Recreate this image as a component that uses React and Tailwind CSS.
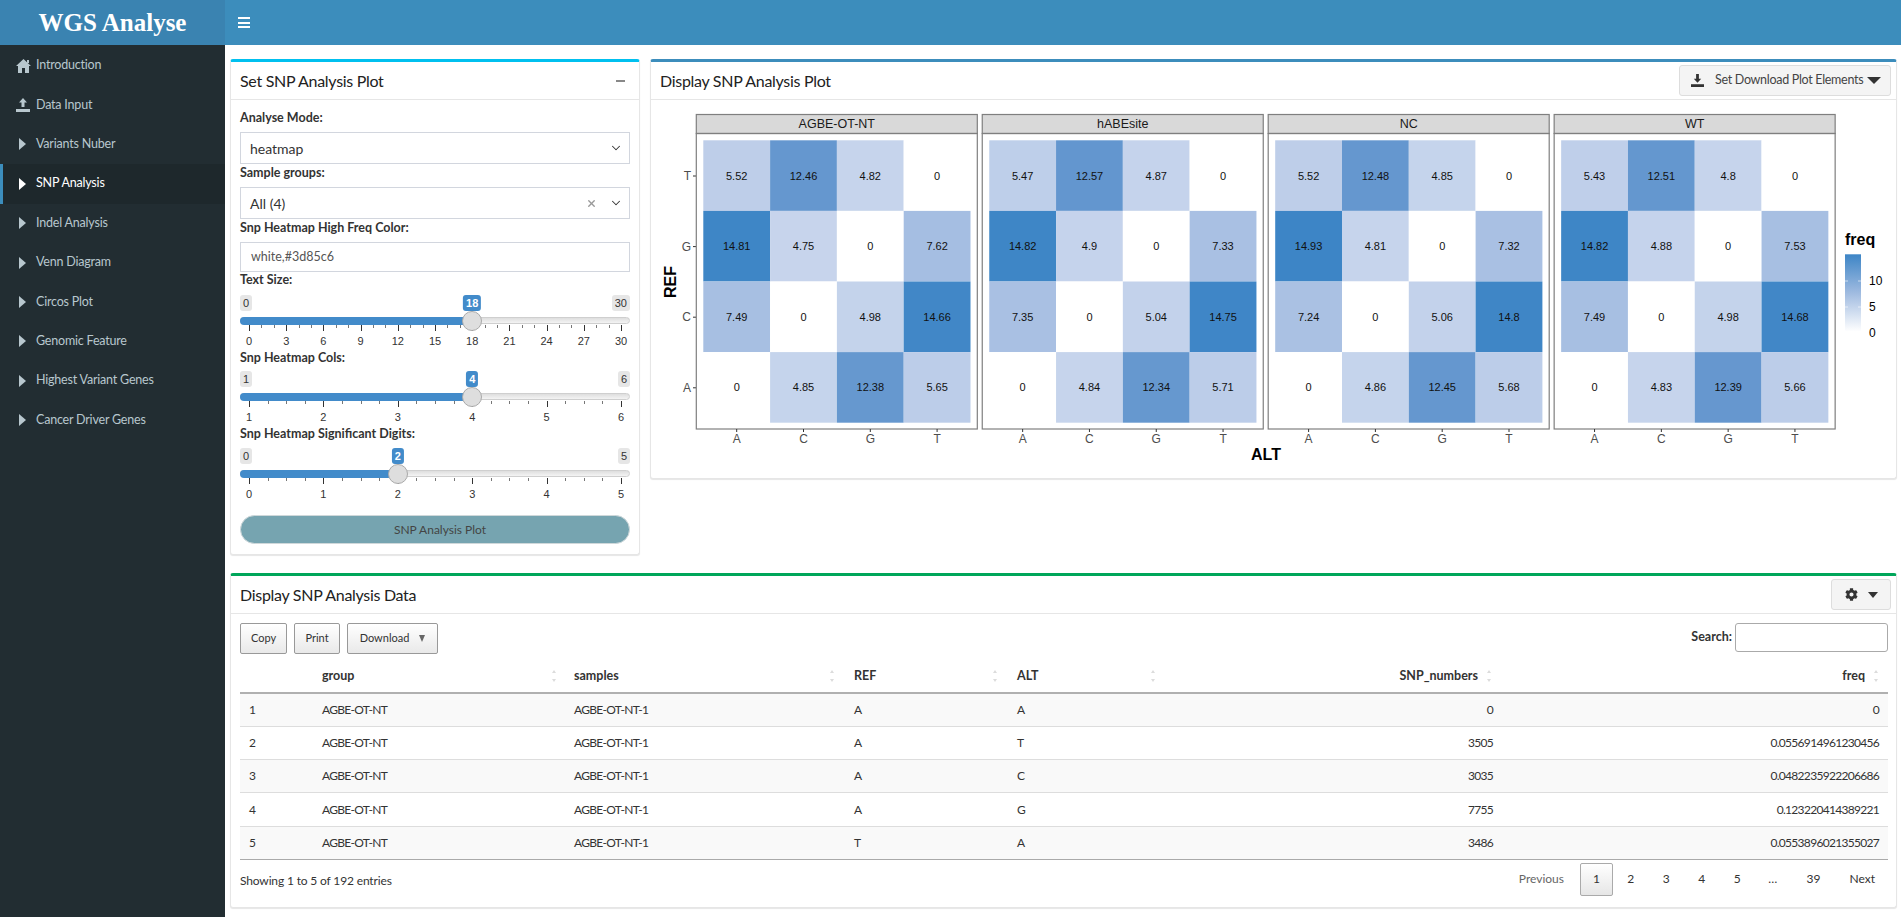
import React from 'react';
import { FaCog } from 'react-icons/fa';
import { ChevronDown, X } from 'lucide-react';

const navItems = [
  { label: 'Introduction', icon: 'home' },
  { label: 'Data Input', icon: 'upload' },
  { label: 'Variants Nuber' },
  { label: 'SNP Analysis', active: true },
  { label: 'Indel Analysis' },
  { label: 'Venn Diagram' },
  { label: 'Circos Plot' },
  { label: 'Genomic Feature' },
  { label: 'Highest Variant Genes' },
  { label: 'Cancer Driver Genes' },
];

const facets = [
  { name: 'AGBE-OT-NT', rows: [[5.52, 12.46, 4.82, 0], [14.81, 4.75, 0, 7.62], [7.49, 0, 4.98, 14.66], [0, 4.85, 12.38, 5.65]] },
  { name: 'hABEsite', rows: [[5.47, 12.57, 4.87, 0], [14.82, 4.9, 0, 7.33], [7.35, 0, 5.04, 14.75], [0, 4.84, 12.34, 5.71]] },
  { name: 'NC', rows: [[5.52, 12.48, 4.85, 0], [14.93, 4.81, 0, 7.32], [7.24, 0, 5.06, 14.8], [0, 4.86, 12.45, 5.68]] },
  { name: 'WT', rows: [[5.43, 12.51, 4.8, 0], [14.82, 4.88, 0, 7.53], [7.49, 0, 4.98, 14.68], [0, 4.83, 12.39, 5.66]] },
];

const tableRows = [
  [1, 'AGBE-OT-NT', 'AGBE-OT-NT-1', 'A', 'A', '0', '0'],
  [2, 'AGBE-OT-NT', 'AGBE-OT-NT-1', 'A', 'T', '3505', '0.0556914961230456'],
  [3, 'AGBE-OT-NT', 'AGBE-OT-NT-1', 'A', 'C', '3035', '0.0482235922206686'],
  [4, 'AGBE-OT-NT', 'AGBE-OT-NT-1', 'A', 'G', '7755', '0.123220414389221'],
  [5, 'AGBE-OT-NT', 'AGBE-OT-NT-1', 'T', 'A', '3486', '0.0553896021355027'],
];

// colour ramp read off the plot
const stops = [
  [0, [255, 255, 255]],
  [4.8, [198, 212, 236]],
  [7.5, [167, 191, 226]],
  [12.45, [101, 151, 207]],
  [14.9, [61, 133, 198]],
];

const tileColor = (v) => {
  for (let i = 1; i < stops.length; i++) {
    if (v <= stops[i][0]) {
      const [a, ca] = stops[i - 1];
      const [b, cb] = stops[i];
      const t = (v - a) / (b - a);
      return `rgb(${ca.map((c, k) => Math.round(c + (cb[k] - c) * t)).join(',')})`;
    }
  }
  return 'rgb(61,133,198)';
};

const NavIcon = ({ icon }) => {
  if (icon === 'home') {
    return (
      <svg width="15" height="14" viewBox="0 0 15 14" className="ml-[1px] mr-[5px]" fill="currentColor">
        <path d="M7.5 0 L15 7 L13 7 L13 14 L9 14 L9 9 L6 9 L6 14 L2 14 L2 7 L0 7 Z" />
        <rect x="11" y="1" width="2" height="3" />
      </svg>
    );
  }
  if (icon === 'upload') {
    return (
      <svg width="14" height="14" viewBox="0 0 14 14" className="ml-[1px] mr-[6px]" fill="currentColor">
        <path d="M7 0 L11 4.5 L8.5 4.5 L8.5 9 L5.5 9 L5.5 4.5 L3 4.5 Z" />
        <rect x="0" y="11" width="14" height="3" />
      </svg>
    );
  }
  return (
    <svg width="7" height="12" viewBox="0 0 7 12" className="ml-[4px] mr-[10px]" fill="currentColor">
      <path d="M0 0 L7 6 L0 12 Z" />
    </svg>
  );
};

const Sidebar = () => (
  <aside className="w-[225px] shrink-0 bg-[#222d32] pb-[1px]">
    <ul className="pt-[1px] text-[#b8c7ce]">
      {navItems.map(({ label, icon, active }) => (
        <li
          key={label}
          className={`flex h-[39.4px] items-center text-[12.5px] tracking-[-0.2px] ${
            active ? 'bg-[#1e282c] text-white border-l-[3px] border-[#3c8dbc] pl-[12px]' : 'pl-[15px]'
          }`}
        >
          <NavIcon icon={icon} />
          <span>{label}</span>
        </li>
      ))}
    </ul>
  </aside>
);

const Box = ({ color, title, right, className, children }) => (
  <section className={`bg-white rounded-[3px] border border-[#e6e6e6] border-t-[3px] ${color} shadow-[0_1px_1px_rgba(0,0,0,0.1)] ${className}`}>
    <div className="flex h-[38px] items-center justify-between border-b border-[#e6e6e6] pl-[9px] pr-[5px]">
      <h3 className="text-[16px] tracking-[-0.3px] text-[#222]">{title}</h3>
      {right}
    </div>
    {children}
  </section>
);

const Label = ({ children, className = '' }) => (
  <div className={`text-[12.5px] font-bold leading-[14px] text-[#333] ${className}`}>{children}</div>
);

const SelectBox = ({ value, clearable }) => (
  <div className="mt-[7px] flex h-[32px] items-center border border-[#d2d6de] pl-[9px] pr-[6px] text-[14px] text-[#333]">
    <span className="flex-1">{value}</span>
    {clearable && <X size={11} strokeWidth={3} className="mr-[12px] text-[#999]" />}
    <ChevronDown size={14} strokeWidth={1.75} className="text-[#333]" />
  </div>
);

const Slider = ({ min, max, value, labels, minors, className }) => {
  const pos = (v) => ((v - min) / (max - min)) * 100;
  const intervals = labels.length - 1;
  const ticks = [];
  for (let i = 0; i <= intervals; i++) {
    ticks.push({ p: (i / intervals) * 100, major: true });
    if (i < intervals) {
      for (let m = 1; m <= minors; m++) {
        ticks.push({ p: ((i + m / (minors + 1)) / intervals) * 100, major: false });
      }
    }
  }
  return (
    <div className={`relative h-[56px] font-['Liberation_Sans',sans-serif] text-[11px] text-[#333] ${className}`}>
      <span className="absolute left-0 top-0 flex h-[16px] items-center rounded-[3px] bg-[#e6e6e6] px-[3px]">{min}</span>
      <span className="absolute right-0 top-0 flex h-[16px] items-center rounded-[3px] bg-[#e6e6e6] px-[3px]">{max}</span>
      <div className="absolute left-0 right-0 top-[22px] h-[7px] rounded-full border border-[#cfcfcf] bg-gradient-to-b from-[#dedede] to-[#f4f4f4]" />
      {/* ticks run between the 9px insets of the slider */}
      <div className="absolute left-[9px] right-[9px] top-0 h-full">
        <div
          className="absolute left-[-9px] top-[22px] h-[8px] rounded-l-full bg-[#428bca]"
          style={{ width: `calc(${pos(value)}% + 9px)` }}
        />
        {ticks.map(({ p, major }) => (
          <span
            key={p}
            className={`absolute top-[30px] w-px ${major ? 'h-[6px] bg-[#333]' : 'h-[3px] bg-[#777]'}`}
            style={{ left: `${p}%` }}
          />
        ))}
        {labels.map((l, i) => (
          <span
            key={l}
            className="absolute top-[38px] -translate-x-1/2 text-[#333]"
            style={{ left: `${(i / intervals) * 100}%` }}
          >
            {l}
          </span>
        ))}
        <span
          className="absolute top-0 flex h-[16px] -translate-x-1/2 items-center rounded-[3px] bg-[#428bca] px-[3px] font-bold text-white"
          style={{ left: `${pos(value)}%` }}
        >
          {value}
        </span>
        <span
          className="absolute top-[16px] h-[20px] w-[20px] -translate-x-1/2 rounded-full border border-[#aaa] bg-[#dedede]"
          style={{ left: `${pos(value)}%` }}
        />
      </div>
    </div>
  );
};

const SettingsBox = () => (
  <Box
    color="border-t-[#00c0ef]"
    title="Set SNP Analysis Plot"
    className="w-[410px] h-[496px] shrink-0"
    right={<span className="mr-[9px] h-[2px] w-[9px] bg-[#888]" />}
  >
    <div className="px-[9px] pt-[11px]">
      <Label>Analyse Mode:</Label>
      <SelectBox value="heatmap" />
      <Label className="mt-[2px]">Sample groups:</Label>
      <SelectBox value="All (4)" clearable />
      <Label className="mt-[2px]">Snp Heatmap High Freq Color:</Label>
      <div className="mt-[7px] flex h-[30px] items-center border border-[#d2d6de] pl-[10px] text-[12.5px] text-[#555]">white,#3d85c6</div>
      <Label className="mt-[1px]">Text Size:</Label>
      <Slider min={0} max={30} value={18} labels={[0, 3, 6, 9, 12, 15, 18, 21, 24, 27, 30]} minors={2} className="mt-[8px]" />
      <Label>Snp Heatmap Cols:</Label>
      <Slider min={1} max={6} value={4} labels={[1, 2, 3, 4, 5, 6]} minors={3} className="mt-[6px]" />
      <Label>Snp Heatmap Significant Digits:</Label>
      <Slider min={0} max={5} value={2} labels={[0, 1, 2, 3, 4, 5]} minors={3} className="mt-[7px]" />
      <button className="mt-[11px] flex h-[29px] w-full items-center justify-center rounded-full border border-[#cfd8da] bg-[#76a4b0] pl-[10px] text-[12px] text-[#444]">
        SNP Analysis Plot
      </button>
    </div>
  </Box>
);

const HeatmapPlot = () => {
  const pitch = 285.95;
  const fontSans = 'Liberation Sans, Arial, sans-serif';
  return (
    <svg width="1245" height="376" className="block" fontFamily={fontSans}>
      {/* coordinates below are page coordinates */}
      <g transform="translate(-651,-100)">
        <text x="676" y="282" transform="rotate(-90 676 282)" textAnchor="middle" fontSize="16" fontWeight="bold">REF</text>
        {['T', 'G', 'C', 'A'].map((l, r) => (
          <g key={l}>
            <text x="691" y={176 + r * 70.6} dy="4" textAnchor="end" fontSize="12" fill="#4d4d4d">{l}</text>
            <line x1="693" x2="696" y1={176 + r * 70.6} y2={176 + r * 70.6} stroke="#333" />
          </g>
        ))}
        {facets.map((f, i) => {
          const x0 = 696.3 + i * pitch;
          return (
            <g key={f.name}>
              {f.rows.map((row, r) =>
                row.map((v, c) => {
                  const x = x0 + 7 + c * 66.8;
                  const y = 140.3 + r * 70.6;
                  return (
                    <g key={c}>
                      <rect x={x} y={y} width="66.8" height="70.6" fill={tileColor(v)} />
                      <text x={x + 33.4} y={y + 35.3} dy="4" textAnchor="middle" fontSize="11" fill="#111">{v}</text>
                    </g>
                  );
                })
              )}
              <rect x={x0} y="114.5" width="281" height="19" fill="#d9d9d9" stroke="#7f7f7f" strokeWidth="1.2" />
              <text x={x0 + 140.5} y="128" textAnchor="middle" fontSize="12.5" fill="#1a1a1a">{f.name}</text>
              <rect x={x0} y="133.5" width="281" height="295.5" fill="none" stroke="#7f7f7f" strokeWidth="1.2" />
              {['A', 'C', 'G', 'T'].map((l, c) => (
                <g key={l}>
                  <line x1={x0 + 40.4 + c * 66.8} x2={x0 + 40.4 + c * 66.8} y1="429" y2="432" stroke="#333" />
                  <text x={x0 + 40.4 + c * 66.8} y="443" textAnchor="middle" fontSize="12" fill="#4d4d4d">{l}</text>
                </g>
              ))}
            </g>
          );
        })}
        <text x="1266" y="460" textAnchor="middle" fontSize="16" fontWeight="bold">ALT</text>
        <text x="1845" y="245" fontSize="16" fontWeight="bold">freq</text>
        <defs>
          <linearGradient id="freqBar" x1="0" y1="0" x2="0" y2="1">
            <stop offset="0" stopColor="#3d85c6" />
            <stop offset="0.5" stopColor="#a0bbe0" />
            <stop offset="1" stopColor="#ffffff" />
          </linearGradient>
        </defs>
        <rect x="1845" y="254.3" width="16" height="77.4" fill="url(#freqBar)" />
        {[[10, 281], [5, 307], [0, 333]].map(([l, y]) => (
          <g key={l}>
            <line x1="1845" x2="1848" y1={y} y2={y} stroke="#fff" opacity="0.6" />
            <line x1="1858" x2="1861" y1={y} y2={y} stroke="#fff" opacity="0.6" />
            <text x="1869" y={y + 4} fontSize="12">{l}</text>
          </g>
        ))}
      </g>
    </svg>
  );
};

const PlotBox = () => (
  <Box
    color="border-t-[#3c8dbc]"
    title="Display SNP Analysis Plot"
    className="flex-1 h-[420px]"
    right={
      <button className="flex h-[31px] w-[212px] items-center rounded-[3px] border border-[#ddd] bg-[#f4f4f4] pl-[11px] text-[12.5px] tracking-[-0.3px] text-[#444]">
        <svg width="13" height="13" viewBox="0 0 14 14" fill="currentColor" className="text-[#333]">
          <path d="M5.5 0 L8.5 0 L8.5 5 L11 5 L7 9.5 L3 5 L5.5 5 Z" />
          <rect x="0" y="11" width="14" height="3" />
        </svg>
        <span className="ml-[11px]">Set Download Plot Elements</span>
        <span className="ml-[4px] h-0 w-0 border-x-[7px] border-t-[7px] border-x-transparent border-t-[#333]" />
      </button>
    }
  >
    <HeatmapPlot />
  </Box>
);

const SortIcon = () => (
  <svg width="6" height="14" viewBox="0 0 6 14" fill="#dcdcdc" className="absolute top-[9px]">
    <path d="M3 1 L5 4 L1 4 Z M3 13 L5 10 L1 10 Z" />
  </svg>
);

const HeadCell = ({ children, align = 'left', iconRight = 11 }) => (
  <th className={`relative ${align === 'left' ? 'pl-[8px] text-left' : 'pr-[23px] text-right'}`}>
    {children}
    <span className="absolute top-0 h-full" style={{ right: iconRight + 6 }}>
      <SortIcon />
    </span>
  </th>
);

const DtButton = ({ children, className = '' }) => (
  <button className={`flex h-[31px] items-center justify-center rounded-[2px] border border-[#999] bg-gradient-to-b from-white to-[#e9e9e9] text-[11px] text-[#333] ${className}`}>
    {children}
  </button>
);

const DataBox = () => (
  <Box
    color="border-t-[#00a65a]"
    title="Display SNP Analysis Data"
    className="mt-[18px] h-[335px]"
    right={
      <button className="flex h-[31px] w-[60px] items-center justify-center gap-[10px] rounded-[3px] border border-[#ddd] bg-[#f4f4f4] text-[#333]">
        <FaCog size={13} />
        <span className="h-0 w-0 border-x-[5px] border-t-[6px] border-x-transparent border-t-[#333]" />
      </button>
    }
  >
    <div className="pl-[9px] pr-[8px] pt-[9px]">
      <div className="flex h-[31px] items-start justify-between">
        <div className="flex gap-[7px]">
          <DtButton className="w-[47px]">Copy</DtButton>
          <DtButton className="w-[46px]">Print</DtButton>
          <DtButton className="w-[91px] gap-[10px]">
            Download
            <span className="h-0 w-0 border-x-[3.5px] border-t-[7px] border-x-transparent border-t-[#666]" />
          </DtButton>
        </div>
        <div className="flex items-center gap-[3px] text-[12.5px] font-bold text-[#333]">
          Search:
          <span className="h-[29px] w-[153px] rounded-[3px] border border-[#aaa] bg-white" />
        </div>
      </div>
      <table className="mt-[6px] w-[1648px] table-fixed text-[12px] tracking-[-0.7px] text-[#333]">
        <colgroup>
          <col className="w-[74px]" />
          <col className="w-[252px]" />
          <col className="w-[280px]" />
          <col className="w-[163px]" />
          <col className="w-[151px]" />
          <col className="w-[341px]" />
          <col className="w-[387px]" />
        </colgroup>
        <thead>
          <tr className="h-[33px] border-b-2 border-[#b0b0b0] text-[12.5px] font-bold tracking-normal">
            <th />
            <HeadCell iconRight={9}>group</HeadCell>
            <HeadCell iconRight={11}>samples</HeadCell>
            <HeadCell iconRight={11}>REF</HeadCell>
            <HeadCell iconRight={4}>ALT</HeadCell>
            <HeadCell align="right" iconRight={9}>SNP_numbers</HeadCell>
            <HeadCell align="right" iconRight={9}>freq</HeadCell>
          </tr>
        </thead>
        <tbody>
          {tableRows.map((row, i) => (
            <tr key={row[0]} className={`h-[33.3px] border-b border-[#ddd] last:border-[#aaa] ${i % 2 === 0 ? 'bg-[#f9f9f9]' : 'bg-white'}`}>
              <td className="pl-[9px]">{row[0]}</td>
              <td className="pl-[8px]">{row[1]}</td>
              <td className="pl-[8px]">{row[2]}</td>
              <td className="pl-[8px]">{row[3]}</td>
              <td className="pl-[8px]">{row[4]}</td>
              <td className="pr-[8px] text-right">{row[5]}</td>
              <td className="pr-[9px] text-right">{row[6]}</td>
            </tr>
          ))}
        </tbody>
      </table>
      <div className="mt-[3px] flex items-start justify-between text-[12px] text-[#333]">
        <span className="mt-[9px] tracking-[-0.15px]">Showing 1 to 5 of 192 entries</span>
        <div className="flex h-[33px] items-center pr-[13px]">
          <span className="mr-[16px] text-[#666]">Previous</span>
          <span className="flex h-[33px] w-[33px] items-center justify-center rounded-[2px] border border-[#aaa] bg-gradient-to-b from-white to-[#e6e6e6]">1</span>
          <span className="w-[35.5px] text-center">2</span>
          <span className="w-[35.5px] text-center">3</span>
          <span className="w-[35.5px] text-center">4</span>
          <span className="w-[35.5px] text-center">5</span>
          <span className="w-[35.5px] text-center">…</span>
          <span className="w-[46px] text-center">39</span>
          <span className="ml-[13px]">Next</span>
        </div>
      </div>
    </div>
  </Box>
);

export default function App() {
  return (
    <div className="min-h-screen bg-white font-[Lato,sans-serif]">
      <header className="flex h-[45px] bg-[#3c8dbc] text-white">
        <div className="flex w-[225px] shrink-0 items-center justify-center bg-[#3a83b1] font-['Liberation_Serif',serif] text-[25px] font-bold">
          WGS Analyse
        </div>
        <div className="flex flex-col justify-center gap-[2.5px] pl-[13px]">
          <span className="h-[2px] w-[12px] bg-white" />
          <span className="h-[2px] w-[12px] bg-white" />
          <span className="h-[2px] w-[12px] bg-white" />
        </div>
      </header>
      <div className="flex min-h-[872px] items-stretch bg-white">
        <Sidebar />
        <main className="min-w-0 flex-1 pl-[5px] pr-[4px] pt-[14px]">
          <div className="flex items-start gap-[10px]">
            <SettingsBox />
            <PlotBox />
          </div>
          <DataBox />
        </main>
      </div>
    </div>
  );
}
